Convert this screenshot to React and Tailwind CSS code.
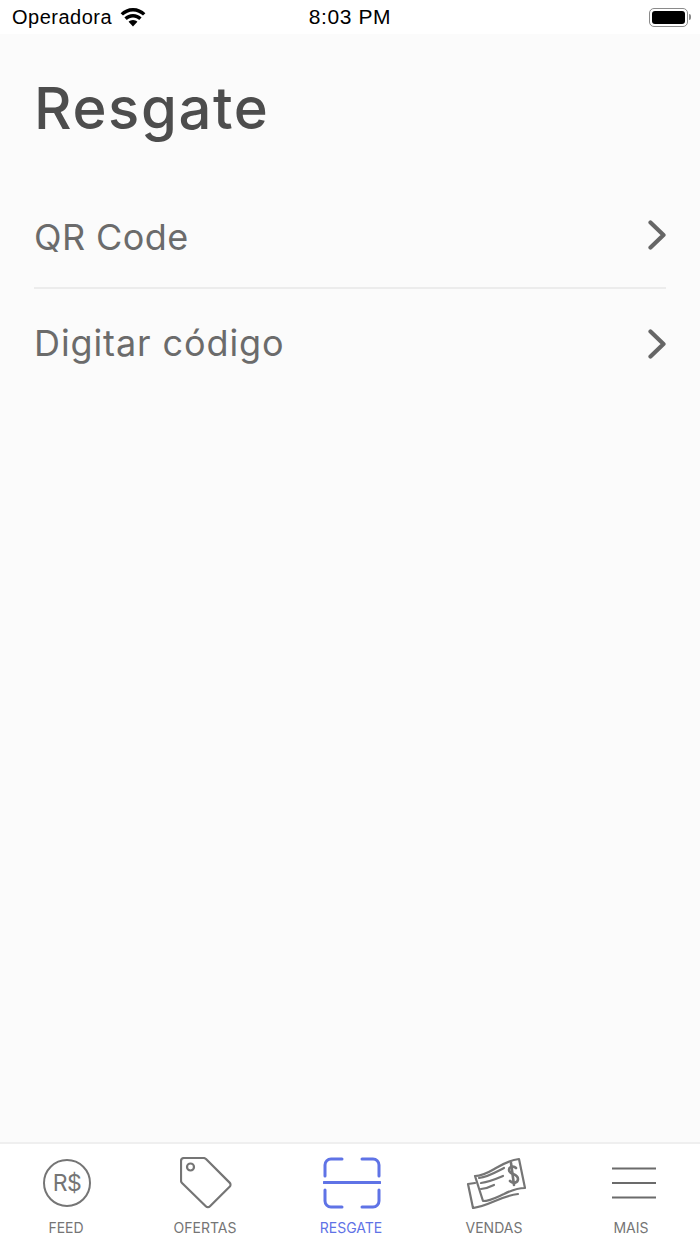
const rows = [
  { label: 'QR Code', h: 'h-[101px]', border: true, pb: 'pb-[1px]', arrow: '-translate-y-[2px]', track: 'tracking-[0.4px]' },
  { label: 'Digitar código', h: 'h-[110px]', border: false, pb: 'pb-[2px]', arrow: 'translate-y-[1px]', track: 'tracking-[0.9px]' },
];

function Chevron({ className }) {
  return (
    <svg width="18" height="30" viewBox="0 0 18 30" fill="none" stroke="#666666" strokeWidth="4.200" strokeLinecap="round" strokeLinejoin="round" className={className}>
      <path d="M2.500 2.500L15.500 15 2.500 27.500" />
    </svg>
  );
}

function FeedIcon() {
  return (
    <svg width="48" height="48" viewBox="0 0 48 48" fill="none" stroke="#757575" strokeWidth="2">
      <circle cx="24" cy="24" r="23" />
      <text x="24" y="32" textAnchor="middle" fontFamily="Inter, sans-serif" fontSize="23" fill="#757575" stroke="none" letterSpacing="-0.5">R$</text>
    </svg>
  );
}

function TagIcon() {
  return (
    <svg width="52" height="52" viewBox="0 0 52 52" fill="none" stroke="#757575" strokeWidth="2.200" strokeLinejoin="round">
      <path d="M4 1h19.500c1 0 1.800.4 2.500 1l23.600 23.600c1.200 1.200 1.200 3 0 4.200L30 49.300c-1.200 1.200-3 1.200-4.200 0L2 26c-.7-.7-1-1.500-1-2.500V4c0-1.700 1.300-3 3-3z" />
      <circle cx="10.500" cy="10" r="3.500" />
    </svg>
  );
}

function ScanIcon() {
  return (
    <svg width="58" height="52" viewBox="0 0 58 52" fill="none" stroke="#5f73e6" strokeWidth="3" strokeLinecap="round">
      <path d="M19 2H8a6 6 0 0 0-6 6v11" />
      <path d="M39 2h11a6 6 0 0 1 6 6v11" />
      <path d="M2 33v11a6 6 0 0 0 6 6h11" />
      <path d="M56 33v11a6 6 0 0 1-6 6H39" />
      <path d="M1 25.500h56" />
    </svg>
  );
}

function MoneyIcon() {
  return (
    <svg width="60" height="52" viewBox="0 0 60 52" fill="none" stroke="#757575" strokeWidth="2.200" strokeLinejoin="round" strokeLinecap="round">
      <path d="M9 19c8 0 14-4 21-8 7-4 14-8 23-9l6 29c-8 0-15 3-21 6-7 3-14 7-21 7z" />
      <path d="M9 26l-7 1 5 24c8-1 15-4 22-7 7-3 14-6 23-7" />
      <path d="M13 21c9-1 17-6 25-10" />
      <path d="M15 26c8-1 15-4 22-7" />
      <path d="M15 32c5-.5 9-2 13-4" />
      <path d="M50 11c-2-2-7-2-7 2 0 5 9 3 9 9 0 4-5 5-8 2" strokeWidth="2.600" />
      <path d="M45 6l3 22" strokeWidth="2.600" />
    </svg>
  );
}

function MenuIcon() {
  return (
    <svg width="44" height="32" viewBox="0 0 44 32" fill="none" stroke="#6b6b6b" strokeWidth="2">
      <path d="M0 1.500h44M0 16h44M0 30.500h44" />
    </svg>
  );
}

const tabs = [
  { label: 'FEED', icon: <FeedIcon />, w: 'w-[132px]', shift: 'ml-[2px]' },
  { label: 'OFERTAS', icon: <TagIcon />, w: 'w-[146px]', shift: 'ml-[2px]' },
  { label: 'RESGATE', icon: <ScanIcon />, w: 'w-[146px]', shift: 'ml-[2px]', active: true },
  { label: 'VENDAS', icon: <MoneyIcon />, w: 'w-[140px]', shift: 'ml-[4px]' },
  { label: 'MAIS', icon: <MenuIcon />, w: 'w-[134px]', shift: 'ml-[5px]' },
];

export default function App() {
  return (
    <div className="w-[700px] h-[1244px] flex flex-col bg-white font-['Inter',sans-serif] overflow-hidden">
      {/* Status bar */}
      <div className="h-[34px] shrink-0 bg-white grid grid-cols-3 items-center px-3 text-black font-['Liberation_Sans',sans-serif]">
        <div className="flex items-center gap-2 text-[20px] tracking-[0.5px]">
          <span>Operadora</span>
          <svg width="26" height="19" viewBox="0 0 26 19" fill="#000">
            <path d="M13 0C8 0 3.800 2 .6 5.200L3 7.600C5.600 5 9.100 3.400 13 3.400S20.400 5 23 7.600l2.400-2.400C22.200 2 18 0 13 0z" />
            <path d="M13 6c-3.400 0-6.400 1.300-8.600 3.500l2.400 2.400C8.400 10.400 10.600 9.400 13 9.400s4.600 1 6.200 2.500l2.400-2.400C19.400 7.300 16.400 6 13 6z" />
            <path d="M13 12c-1.800 0-3.300.7-4.400 1.800L13 18.500l4.400-4.700C16.300 12.700 14.800 12 13 12z" />
          </svg>
        </div>
        <div className="text-center text-[21px] font-medium tracking-[0.6px]">8:03 PM</div>
        <div className="flex justify-end items-center -mr-[3px]">
          <div className="w-[39px] h-[19px] rounded-[5px] border border-[#8a8a8a] p-[2px]">
            <div className="w-full h-full rounded-[3px] bg-black" />
          </div>
          <div className="w-[2px] h-[6px] rounded-r-sm bg-[#8a8a8a] ml-[1px]" />
        </div>
      </div>

      {/* Content */}
      <main className="flex-1 bg-[#fbfbfb] px-[34px]">
        <h1 className="mt-[36px] h-[76px] text-[58px] leading-[76px] font-medium tracking-[1.6px] text-[#4d4d4d]">Resgate</h1>
        <div className="mt-[42px]">
          {rows.map(r => (
            <div key={r.label} className={`flex items-center justify-between ${r.h} ${r.pb} ${r.border ? 'border-b-2 border-[#ececec]' : ''}`}>
              <span className={`text-[36px] ${r.track} text-[#6b6b6b]`}>{r.label}</span>
              <Chevron className={r.arrow} />
            </div>
          ))}
        </div>
      </main>

      {/* Tab bar */}
      <nav className="h-[102px] shrink-0 bg-white border-t-2 border-[#efefef] flex">
        {tabs.map(t => (
          <div key={t.label} className={`${t.w} flex flex-col items-center`}>
            <div className={`h-[74px] pt-[4px] flex items-center justify-center ${t.shift}`}>{t.icon}</div>
            <span className={`text-[14px] leading-[20px] ${t.active ? 'text-[#5f73e6]' : 'text-[#757575]'}`}>{t.label}</span>
          </div>
        ))}
      </nav>
    </div>
  );
}
